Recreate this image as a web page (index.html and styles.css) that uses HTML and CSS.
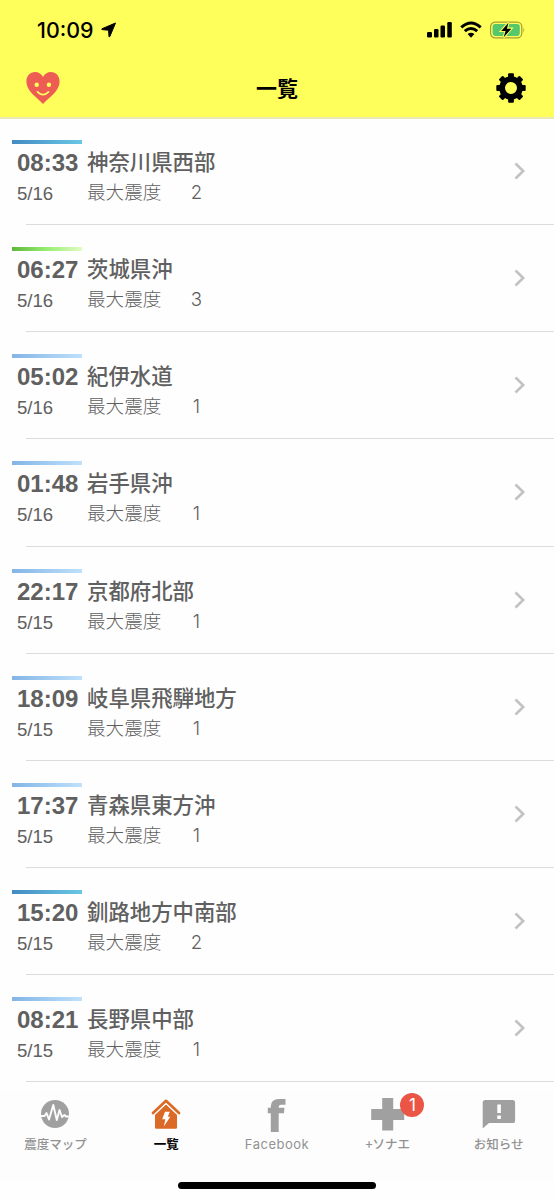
FILE: index.html
```html
<!DOCTYPE html>
<html lang="ja">
<head>
    <meta charset="UTF-8">
    <title>一覧</title>

    <link rel="stylesheet" href="styles.css">
</head>
<body>
<header>
    <div class="status">
        <span class="clock">10:09</span>
        <svg class="location" width="16" height="16" viewBox="0 0 16 16"><path d="M14.500 1L1 6.800q-.8.600.1.800L7.600 8.200 8 14.500q.3.900.8.100z" stroke="#000" stroke-width="1" stroke-linejoin="round"/></svg>
        <svg class="signal" width="26" height="18" viewBox="0 0 26 18">
            <rect x="0" y="11" width="5" height="5.500" rx="1.200"/>
            <rect x="7" y="8" width="4.500" height="8.500" rx="1.200"/>
            <rect x="13.500" y="4.500" width="4.500" height="12" rx="1.200"/>
            <rect x="20.300" y="1" width="4.500" height="15.500" rx="1.200"/>
        </svg>
        <svg class="wifi" width="22" height="18" viewBox="0 0 22 18">
            <path d="M1.300 6.400Q11-2.500 20.700 6.400M4.800 10.200Q11 4.700 17.200 10.200" fill="none" stroke="#000" stroke-width="3"/>
            <path d="M11 16.700L7.600 13Q11 10.400 14.400 13z"/>
        </svg>
        <svg class="battery" width="36" height="18" viewBox="0 0 36 18">
            <rect x=".6" y="1.200" width="31.200" height="15.600" rx="4.600" fill="none" stroke="#a39d35" stroke-width="1.200"/>
            <rect x="2.600" y="3.100" width="27.200" height="11.800" rx="2.800" fill="#55c86b"/>
            <path d="M33.400 6.300q1.800 2.700 0 5.400z" fill="#a39d35"/>
            <path d="M18.500 1.800L11.200 9.900h4.300l-1.800 6.300 7.600-8.500h-4.400z" fill="#000" stroke="#ffff5c" stroke-width="2.200" paint-order="stroke"/>
        </svg>
    </div>
    <div class="title">
        <svg class="heart" width="34" height="34" viewBox="0 0 34 34">
            <path d="M17 33C11 26.700.4 20.300.4 10.600.4 4.600 4.400 1 9 1c3.600 0 6.600 2 8 5 1.400-3 4.400-5 8-5 4.600 0 8.600 3.600 8.600 9.600C33.600 20.300 23 26.700 17 33z" fill="#ee5d54"/>
            <circle cx="10.700" cy="13.700" r="2.200" fill="#ffff5c"/>
            <circle cx="22.900" cy="13.700" r="2.200" fill="#ffff5c"/>
            <path d="M11.500 20.800q5.500 5.600 11 0" fill="none" stroke="#ffff5c" stroke-width="1.700" stroke-linecap="round"/>
        </svg>
        <h1>一覧</h1>
        <svg class="gear" width="30" height="30" viewBox="-15 -15 30 30">
            <circle r="8.900" fill="none" stroke="#000" stroke-width="5.800"/>
            <g id="teeth">
                <rect x="-2.900" y="-14.700" width="5.800" height="5" rx="1"/>
                <rect x="-2.900" y="9.700" width="5.800" height="5" rx="1"/>
                <rect x="-14.700" y="-2.900" width="5" height="5.800" rx="1"/>
                <rect x="9.700" y="-2.900" width="5" height="5.800" rx="1"/>
            </g>
            <use href="#teeth" transform="rotate(45)"/>
        </svg>
    </div>
</header>

<main>
    <div class="row lv2">
        <div class="when"><b>08:33</b><span>5/16</span></div>
        <div class="where"><h2>神奈川県西部</h2><p>最大震度<i>2</i></p></div>
        <svg class="arrow" width="12" height="18" viewBox="0 0 12 18"><path d="M1.500 1.500L9.200 9 1.500 16.500"/></svg>
    </div>
    <div class="row lv3">
        <div class="when"><b>06:27</b><span>5/16</span></div>
        <div class="where"><h2>茨城県沖</h2><p>最大震度<i>3</i></p></div>
        <svg class="arrow" width="12" height="18" viewBox="0 0 12 18"><path d="M1.500 1.500L9.200 9 1.500 16.500"/></svg>
    </div>
    <div class="row lv1">
        <div class="when"><b>05:02</b><span>5/16</span></div>
        <div class="where"><h2>紀伊水道</h2><p>最大震度<i>1</i></p></div>
        <svg class="arrow" width="12" height="18" viewBox="0 0 12 18"><path d="M1.500 1.500L9.200 9 1.500 16.500"/></svg>
    </div>
    <div class="row lv1">
        <div class="when"><b>01:48</b><span>5/16</span></div>
        <div class="where"><h2>岩手県沖</h2><p>最大震度<i>1</i></p></div>
        <svg class="arrow" width="12" height="18" viewBox="0 0 12 18"><path d="M1.500 1.500L9.200 9 1.500 16.500"/></svg>
    </div>
    <div class="row lv1">
        <div class="when"><b>22:17</b><span>5/15</span></div>
        <div class="where"><h2>京都府北部</h2><p>最大震度<i>1</i></p></div>
        <svg class="arrow" width="12" height="18" viewBox="0 0 12 18"><path d="M1.500 1.500L9.200 9 1.500 16.500"/></svg>
    </div>
    <div class="row lv1">
        <div class="when"><b>18:09</b><span>5/15</span></div>
        <div class="where"><h2>岐阜県飛騨地方</h2><p>最大震度<i>1</i></p></div>
        <svg class="arrow" width="12" height="18" viewBox="0 0 12 18"><path d="M1.500 1.500L9.200 9 1.500 16.500"/></svg>
    </div>
    <div class="row lv1">
        <div class="when"><b>17:37</b><span>5/15</span></div>
        <div class="where"><h2>青森県東方沖</h2><p>最大震度<i>1</i></p></div>
        <svg class="arrow" width="12" height="18" viewBox="0 0 12 18"><path d="M1.500 1.500L9.200 9 1.500 16.500"/></svg>
    </div>
    <div class="row lv2">
        <div class="when"><b>15:20</b><span>5/15</span></div>
        <div class="where"><h2>釧路地方中南部</h2><p>最大震度<i>2</i></p></div>
        <svg class="arrow" width="12" height="18" viewBox="0 0 12 18"><path d="M1.500 1.500L9.200 9 1.500 16.500"/></svg>
    </div>
    <div class="row lv1">
        <div class="when"><b>08:21</b><span>5/15</span></div>
        <div class="where"><h2>長野県中部</h2><p>最大震度<i>1</i></p></div>
        <svg class="arrow" width="12" height="18" viewBox="0 0 12 18"><path d="M1.500 1.500L9.200 9 1.500 16.500"/></svg>
    </div>
</main>

<nav>
    <a class="tab">
        <svg width="36" height="36" viewBox="0 0 36 36">
            <circle cx="18" cy="18" r="14" fill="#a0a0a0"/>
            <path d="M3 20h4.500l2-3 2.500 6.500L16.300 9l3.500 15 2.700-10 2.500 7 2.500-2 1.500 1.500H33" fill="none" stroke="#fdfdfd" stroke-width="1.900" stroke-linejoin="round"/>
        </svg>
        <span>震度マップ</span>
    </a>
    <a class="tab active">
        <svg width="36" height="36" viewBox="0 0 36 36">
            <path d="M18 8L29 18.300V31.500q0 1.300-1.300 1.300H8.300Q7 32.800 7 31.500V18.300z" fill="#dc6a27"/>
            <path d="M5.600 19.200L18 7.600 30.400 19.200" fill="none" stroke="#fff" stroke-width="1.400"/>
            <path d="M5 17L18 4.800 31 17" fill="none" stroke="#dc6a27" stroke-width="2.700" stroke-linecap="round" stroke-linejoin="round"/>
            <path d="M17 15.800h4.800l-2 5h2.500l-6.500 9.800 1.600-7.300h-3.200z" fill="#fff"/>
        </svg>
        <span>一覧</span>
    </a>
    <a class="tab">
        <svg width="36" height="36" viewBox="0 0 36 36"><path d="M11.800 36V17.300H8.800V11.700h3V10.500Q11.800 3 20 3h6.500v5.700H22q-2.300 0-2.300 2.300v.7h5.700L25 17.300h-5.300V36z" fill="#a0a0a0"/></svg>
        <span class="latin">Facebook</span>
    </a>
    <a class="tab">
        <svg width="36" height="36" viewBox="0 0 36 36"><path d="M12.200 2h11v11H34.200v11h-11v10.500h-11V24H1.200V13h11z" fill="#a0a0a0"/></svg>
        <em class="badge">1</em>
        <span>+ソナエ</span>
    </a>
    <a class="tab">
        <svg width="36" height="36" viewBox="0 0 36 36">
            <path d="M4.500 4h27q2.600 0 2.600 2.600v17.800q0 2.600-2.600 2.600H8L1.700 32.500V6.600q0-2.600 2.800-2.600z" fill="#a0a0a0"/>
            <path d="M16.300 8.500h3.600v8.500h-3.600zM16.300 19.500h3.600V23h-3.600z" fill="#fff"/>
        </svg>
        <span>お知らせ</span>
    </a>
</nav>
<div class="home"></div>
</body>
</html>
```

FILE: styles.css
```css
html, body {
    margin: 0;
    padding: 0;

    background: #fefefe;
    font-family: 'Liberation Sans', 'Noto Sans CJK JP', sans-serif;
}

body {
    width: 554px;
    height: 1200px;
    overflow: hidden;
    display: flex;
    flex-direction: column;
}

svg {
    display: block;
    flex: none;
}

header {
    height: 119px;
    margin-bottom: -1px;
    box-sizing: border-box;
    border-bottom: 2px solid #ece9b4;
    background: #ffff5c;
    flex: none;
}

.status {
    height: 60px;
    box-sizing: border-box;
    padding: 0 28px 0 37px;
    display: flex;
    align-items: center;
}

.clock {
    width: 60px;
    font: 500 21.4px/24px Inter, sans-serif;
}

.location {
    margin-left: 4px;
}

.signal {
    margin-left: auto;
}

.wifi {
    margin: 0 8px 0 7px;
}

.title {
    height: 55px;
    padding: 0 28px 0 26px;
    display: flex;
    align-items: center;
    justify-content: space-between;
}

h1 {
    margin: 0 2px 2px 0;
    font: 700 21px/30px 'Noto Sans CJK JP', sans-serif;
}

main {
    height: 974px;
    overflow: hidden;
    flex: none;
}

.row {
    height: 107.13px;
    box-sizing: border-box;
    padding: 22px 28px 0 12px;
    display: flex;
    color: #606060;
    background: linear-gradient(#dcdcdc, #dcdcdc) 26px 100% / 528px 1px no-repeat;
}

.when {
    width: 70px;
    height: 66px;
    box-sizing: border-box;
    padding: 6px 0 0 5px;
    background-position: 0 0;
    background-size: 70px 4px;
    background-repeat: no-repeat;
}

.lv1 .when {
    background-image: linear-gradient(90deg, #82b5e6, #bfe1fc);
}

.lv2 .when {
    background-image: linear-gradient(90deg, #448ac2, #69c8e5);
}

.lv3 .when {
    background-image: linear-gradient(90deg, #5eb83b, #98ee72 50%, #e2fbc4);
}

.when b {
    display: block;
    font-size: 24px;
    line-height: 34px;
}

.when span {
    display: block;
    font-size: 18.6px;
    line-height: 28px;
}

.where {
    flex: 1;
    margin-left: 5px;
    font-family: 'Noto Sans CJK JP', sans-serif;
}

.where h2 {
    margin: 5px 0 0;
    font-size: 21.4px;
    font-weight: 500;
    line-height: 32px;
}

.where p {
    margin: 0;
    font-size: 18.6px;
    font-weight: 300;
    line-height: 28px;
}

.where i {
    display: inline-block;
    width: 20px;
    margin-left: 25px;
    font-family: Inter, sans-serif;
    font-style: normal;
    text-align: center;
}

.arrow {
    margin-top: 22px;
    fill: none;
    stroke: #c2c2c2;
    stroke-width: 2.6px;
}

nav {
    height: 90px;
    display: flex;
    background: #fdfdfd;
    flex: none;
}

.tab {
    position: relative;
    flex: 1;
    padding-top: 4px;
    display: flex;
    flex-direction: column;
    align-items: center;
    color: #929292;
    font: 500 12.5px/20px 'Noto Sans CJK JP', sans-serif;
}

.tab span {
    margin-top: 2px;
}

.tab .latin {
    font-family: Inter, sans-serif;
    font-size: 13px;
    font-weight: 400;
    letter-spacing: .5px;
}

.tab.active {
    color: #000;
    font-weight: 700;
}

.badge {
    position: absolute;
    top: 1px;
    left: 68px;
    width: 24px;
    height: 24px;
    border-radius: 50%;
    background: #ea5545;
    color: #fff;
    font: 400 17px/24px Inter, sans-serif;
    text-align: center;
}

.home {
    width: 198px;
    height: 7px;
    margin: 0 auto;
    border-radius: 4px;
    background: #000;
    flex: none;
}
```
